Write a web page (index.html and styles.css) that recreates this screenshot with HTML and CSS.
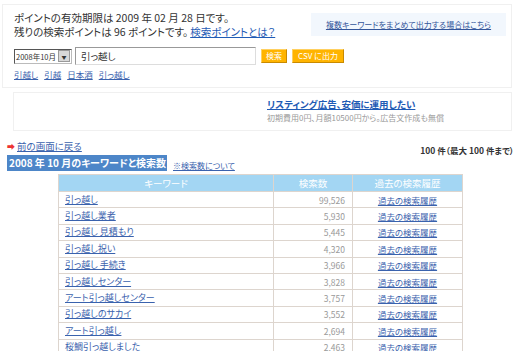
FILE: index.html
```html
<!DOCTYPE html>
<html lang="ja">
<head>
    <meta charset="UTF-8">
    <title>キーワード検索数</title>
    <link rel="stylesheet" href="styles.css">
</head>
<body>
    <div class="search-box">
        <div class="top-row">
            <div class="points">
                <p>ポイントの有効期限は 2009 年 02 月 28 日です。</p>
                <p>残りの検索ポイントは 96 ポイントです。<a href="#" class="strong-link">検索ポイントとは？</a></p>
            </div>
            <div class="multi">
                <a href="#">複数キーワードをまとめて出力する場合はこちら</a>
            </div>
        </div>

        <div class="form-row">
            <div class="select">
                <span>2008年10月</span>
                <span class="arrow">▼</span>
            </div>
            <div class="keyword-input">引っ越し</div>
            <button class="btn">検索</button>
            <button class="btn">CSV に出力</button>
        </div>

        <div class="history">
            <a href="#">引越し</a>
            <a href="#">引越</a>
            <a href="#">日本酒</a>
            <a href="#">引っ越し</a>
        </div>
    </div>

    <div class="ad-box">
        <div class="ad">
            <a href="#">リスティング広告、安価に運用したい</a>
            <p>初期費用0円、月額10500円から。広告文作成も無償</p>
        </div>
    </div>

    <div class="result-head">
        <div class="head-left">
            <div class="back">
                <span class="back-arrow">➡</span><a href="#">前の画面に戻る</a>
            </div>
            <div class="title-row">
                <h2>2008 年 10 月のキーワードと検索数</h2>
                <a href="#" class="note">※検索数について</a>
            </div>
        </div>
        <div class="count">100 件（最大 100 件まで）</div>
    </div>

    <table class="results">
        <thead>
            <tr><th>キーワード</th><th>検索数</th><th>過去の検索履歴</th></tr>
        </thead>
        <tbody id="rows"></tbody>
    </table>

    <script>
        const data = [
            ["引っ越し", "99,526"],
            ["引っ越し業者", "5,930"],
            ["引っ越し 見積もり", "5,445"],
            ["引っ越し祝い", "4,320"],
            ["引っ越し 手続き", "3,966"],
            ["引っ越しセンター", "3,828"],
            ["アート引っ越しセンター", "3,757"],
            ["引っ越しのサカイ", "3,552"],
            ["アート引っ越し", "2,694"],
            ["桜鯛引っ越しました", "2,463"]
        ];
        const tbody = document.getElementById("rows");
        data.forEach(row => {
            const tr = document.createElement("tr");
            tr.innerHTML = `<td class="kw"><a href="#">${row[0]}</a></td><td class="num">${row[1]}</td><td class="past"><a href="#">過去の検索履歴</a></td>`;
            tbody.appendChild(tr);
        });
    </script>
</body>
</html>
```

FILE: styles.css
```css
body {
    margin: 0;
    padding: 4px 8px 0 2px;
    font-family: "Noto Sans CJK JP", "Liberation Sans", sans-serif;
    font-size: 10px;
    color: #333;
    background: #fff;
    font-feature-settings: "palt";
}

a {
    color: #3a62ad;
}

p {
    margin: 0;
}

/* Top search box */
.search-box {
    border: 1px solid #f0f0f0;
    padding: 6px 0 7px 11px;
}

.top-row {
    display: flex;
    justify-content: space-between;
}

.points p {
    font-size: 10.5px;
    line-height: 14px;
}

.strong-link {
    color: #1f5bb5;
    margin-left: 2px;
}

.multi {
    width: 195px;
    height: 23px;
    margin: 2px 5px 0 0;
    background: #f2f7fd;
    display: flex;
    align-items: center;
    justify-content: center;
    font-size: 8px;
}

.multi a {
    color: #33559a;
}

.form-row {
    display: flex;
    align-items: center;
    margin-top: 8px;
}

.select {
    width: 55px;
    height: 13px;
    border: 1px solid #555;
    border-right-color: #bbb;
    border-bottom-color: #bbb;
    display: flex;
    align-items: center;
    justify-content: space-between;
    font-size: 7.5px;
    white-space: nowrap;
    padding-left: 1px;
    overflow: hidden;
}

.arrow {
    flex: none;
    width: 10px;
    height: 10px;
    background: #d8d8d8;
    border: 1px solid #999;
    font-size: 5px;
    display: flex;
    align-items: center;
    justify-content: center;
    margin-right: 1px;
}

.keyword-input {
    width: 174px;
    height: 16px;
    margin-left: 3px;
    border: 1px solid #999;
    border-right-color: #ddd;
    border-bottom-color: #ddd;
    padding-left: 5px;
    font-size: 9.5px;
    line-height: 16px;
}

.btn {
    margin-left: 5px;
    height: 14px;
    padding: 0 4px;
    background: #ffb400;
    color: #fff;
    font-family: inherit;
    font-size: 8px;
    line-height: 12px;
    border: 1px solid #ffd060;
    border-right-color: #c98a00;
    border-bottom-color: #c98a00;
}

.btn + .btn {
    padding: 0 5px;
}

.history {
    display: flex;
    gap: 6px;
    margin-top: 3px;
    font-size: 8.5px;
    line-height: 12px;
}

/* Ad box */
.ad-box {
    margin: 4px 0 0 11px;
    border: 1px solid #f0f0f0;
    height: 37px;
    display: flex;
    padding-left: 253px;
}

.ad {
    padding-top: 5px;
}

.ad a {
    font-weight: bold;
    font-size: 9.5px;
    color: #1f5bb5;
    display: block;
    line-height: 13px;
}

.ad p {
    font-size: 8px;
    color: #999;
    line-height: 13px;
}

/* Result header */
.result-head {
    display: flex;
    justify-content: space-between;
    align-items: flex-start;
    margin-top: 9px;
}

.head-left {
    margin-left: 5px;
}

.back {
    font-size: 9.5px;
    line-height: 13px;
}

.back-arrow {
    color: #e33;
    font-size: 8px;
    margin-right: 2px;
}

.title-row {
    display: flex;
    align-items: flex-end;
    margin-top: 2px;
}

.title-row h2 {
    margin: 0;
    width: 160px;
    height: 16px;
    background: #4d86c8;
    color: #fff;
    font-size: 10px;
    font-weight: bold;
    line-height: 16px;
    padding-left: 2px;
    box-sizing: border-box;
}

.note {
    font-size: 8px;
    margin-left: 6px;
    line-height: 11px;
}

.count {
    font-weight: bold;
    font-size: 8.5px;
    margin-top: 4px;
    margin-right: -2px;
}

/* Result table */
.results {
    margin: 3px 0 0 56px;
    width: 405px;
    border-collapse: collapse;
    border: 1px solid #ddd5ce;
}

.results th {
    background: #a3d6f3;
    color: #fff;
    font-weight: normal;
    font-size: 9.5px;
    height: 16px;
    padding: 0;
    border: 1px solid #ddd5ce;
    border-top: none;
}

.results td {
    height: 15.4px;
    padding: 0;
    border: 1px solid #ddd5ce;
    line-height: 14px;
}

.results th:nth-child(1) {
    width: 214px;
}

.results th:nth-child(2) {
    width: 78px;
}

.kw {
    padding-left: 6px !important;
    font-size: 9px;
}

.num {
    text-align: right;
    padding-right: 7px !important;
    color: #999;
    font-size: 8.5px;
}

.past {
    text-align: center;
    font-size: 8.5px;
}
```
